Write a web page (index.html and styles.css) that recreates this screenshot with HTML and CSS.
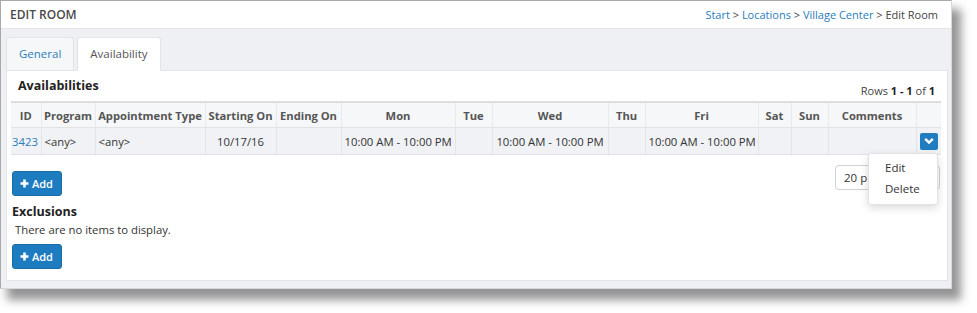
FILE: index.html
```html
<!DOCTYPE html>
<html lang="en">
<head>
    <meta charset="UTF-8">
    <meta name="viewport" content="width=device-width, initial-scale=1.0">
    <title>Edit Room</title>
    <link rel="stylesheet" href="styles.css">
</head>
<body>
    <div class="window">
        <div class="topbar">
            <div class="page-title">EDIT ROOM</div>
            <div class="crumbs">
                <a href="#">Start</a> &gt; <a href="#">Locations</a> &gt; <a href="#">Village Center</a> &gt; Edit Room
            </div>
        </div>

        <div class="main">
            <div class="tabs">
                <a class="tab" href="#">General</a>
                <a class="tab active" href="#">Availability</a>
            </div>

            <div class="panel">
                <div class="section-head">
                    <h2>Availabilities</h2>
                    <div class="rows">Rows <b>1 - 1</b> of <b>1</b></div>
                </div>

                <table class="grid">
                    <colgroup>
                        <col class="w-id"><col class="w-prog"><col class="w-type"><col class="w-start"><col class="w-end">
                        <col class="w-day"><col class="w-short"><col class="w-day2"><col class="w-short">
                        <col class="w-day3"><col class="w-sat"><col class="w-short"><col class="w-comm"><col class="w-act">
                    </colgroup>
                    <thead>
                        <tr>
                            <th>ID</th>
                            <th>Program</th>
                            <th>Appointment Type</th>
                            <th>Starting On</th>
                            <th>Ending On</th>
                            <th>Mon</th>
                            <th>Tue</th>
                            <th>Wed</th>
                            <th>Thu</th>
                            <th>Fri</th>
                            <th>Sat</th>
                            <th>Sun</th>
                            <th>Comments</th>
                            <th></th>
                        </tr>
                    </thead>
                    <tbody>
                        <tr>
                            <td><a href="#">3423</a></td>
                            <td>&lt;any&gt;</td>
                            <td>&lt;any&gt;</td>
                            <td class="mid">10/17/16</td>
                            <td></td>
                            <td class="mid">10:00 AM - 10:00 PM</td>
                            <td></td>
                            <td class="mid">10:00 AM - 10:00 PM</td>
                            <td></td>
                            <td class="mid">10:00 AM - 10:00 PM</td>
                            <td></td>
                            <td></td>
                            <td></td>
                            <td class="act">
                                <button class="caret-btn">
                                    <svg width="10" height="8" viewBox="0 0 10 8"><path d="M1.2 1.8 L5 5.6 L8.8 1.8" fill="none" stroke="#fff" stroke-width="2.4"/></svg>
                                </button>
                                <div class="menu">
                                    <a href="#">Edit</a>
                                    <a href="#">Delete</a>
                                </div>
                            </td>
                        </tr>
                    </tbody>
                </table>

                <div class="actions">
                    <button class="btn-add">
                        <svg width="9" height="9" viewBox="0 0 9 9"><path d="M4.5 0.5 V8.5 M0.5 4.5 H8.5" stroke="#fff" stroke-width="2.6"/></svg>
                        Add
                    </button>
                    <div class="pager">20 p</div>
                </div>

                <h2 class="sub">Exclusions</h2>
                <div class="empty">There are no items to display.</div>
                <button class="btn-add">
                    <svg width="9" height="9" viewBox="0 0 9 9"><path d="M4.5 0.5 V8.5 M0.5 4.5 H8.5" stroke="#fff" stroke-width="2.6"/></svg>
                    Add
                </button>
            </div>
        </div>
    </div>
</body>
</html>
```

FILE: styles.css
```css
body {
    margin: 0;
    min-height: 313px;
    background: #fff;
    font-family: 'Open Sans', 'Liberation Sans', sans-serif;
    font-size: 11.3px;
    color: #444;
}
a {
    color: #2b7dbb;
    text-decoration: none;
}
.window {
    width: 950px;
    background: #eef0f3;
    border-top: 1px solid #a9a9a9;
    border-left: 1px solid #a9a9a9;
    border-right: 1px solid #d6d8db;
    border-bottom: 1px solid #d6d8db;
    box-shadow: 8px 10px 9px 1px rgba(0, 0, 0, 0.42);
}
.topbar {
    height: 27px;
    background: #fff;
    border-bottom: 1px solid #e3e5e8;
    display: flex;
    justify-content: space-between;
    align-items: center;
    padding: 0 13px 0 9px;
}
.page-title {
    font-size: 12px;
    font-weight: 600;
    color: #4a4a4a;
}
.crumbs {
    font-size: 11px;
    color: #444;
}
.main {
    padding: 8px 3px 7px 5px;
}
.tabs {
    display: flex;
    gap: 3px;
}
.tab {
    height: 32px;
    line-height: 32px;
    padding: 0 12px;
    font-size: 11.5px;
    border: 1px solid #e1e4e8;
    border-bottom: none;
    border-radius: 3px 3px 0 0;
    background: #f6f7f9;
    color: #2b7dbb;
}
.tab.active {
    background: #fff;
    color: #555;
    height: 33px;
    margin-bottom: -1px;
    position: relative;
}
.panel {
    background: #fff;
    border: 1px solid #e1e4e8;
    padding: 5px 7px 11px 4px;
}
.section-head {
    display: flex;
    justify-content: space-between;
    height: 25px;
}
h2 {
    margin: 0;
    font-size: 12.5px;
    font-weight: 700;
    line-height: 20px;
    color: #222;
}
.section-head h2 {
    padding-left: 7px;
}
.rows {
    align-self: flex-end;
    margin-bottom: 2px;
    margin-right: 5px;
    line-height: 16px;
    font-size: 11px;
    color: #444;
}
.rows b {
    color: #222;
}
.grid {
    width: 930px;
    table-layout: fixed;
    border-collapse: collapse;
    border-top: 2px solid #dcdee2;
}
.w-id { width: 30px; }
.w-prog { width: 54px; }
.w-type { width: 110px; }
.w-start { width: 71px; }
.w-end { width: 65px; }
.w-day { width: 114px; }
.w-day2 { width: 116px; }
.w-day3 { width: 113px; }
.w-short { width: 37px; }
.w-sat { width: 33px; }
.w-comm { width: 88px; }
.w-act { width: 25px; }
.grid th {
    height: 24px;
    background: #f6f7f8;
    color: #555;
    font-weight: 700;
    font-size: 11.2px;
    text-align: center;
    white-space: nowrap;
    padding: 0 1px;
    border-left: 1px solid #e8eaed;
    border-bottom: 1px solid #e0e2e6;
}
.grid th:first-child,
.grid td:first-child {
    border-left: none;
}
.grid td {
    height: 26px;
    background: #f0f2f5;
    padding: 0 3px;
    white-space: nowrap;
    border-left: 1px solid #e3e5e9;
    border-bottom: 1px solid #dfe1e5;
    color: #333;
}
.grid td.mid {
    text-align: center;
}
.grid td:first-child {
    padding-left: 1px;
}
.grid td.act {
    position: relative;
    padding: 0;
    text-align: right;
    padding-right: 3px;
}
.caret-btn {
    width: 18px;
    height: 17px;
    padding: 0;
    border: none;
    border-radius: 2px;
    background: #1f7dc0;
    display: inline-flex;
    align-items: center;
    justify-content: center;
    vertical-align: middle;
}
.menu {
    position: absolute;
    top: 25px;
    right: 3px;
    width: 68px;
    padding: 4px 0;
    background: #fff;
    border: 1px solid #e0e2e6;
    border-radius: 3px;
    box-shadow: 0 3px 8px rgba(0, 0, 0, 0.15);
    text-align: left;
    z-index: 2;
}
.menu a {
    display: block;
    padding: 2px 0 3px 16px;
    line-height: 16px;
    font-size: 11.5px;
    color: #333;
}
.actions {
    display: flex;
    justify-content: space-between;
    align-items: flex-start;
    margin-top: 10px;
}
.actions .btn-add {
    margin-top: 6px;
}
.btn-add {
    height: 25px;
    padding: 0 8px 0 7px;
    margin-left: 1px;
    background: #1d7cbf;
    border: 1px solid #1a6ca6;
    border-radius: 3px;
    color: #fff;
    font-family: 'Open Sans', 'Liberation Sans', sans-serif;
    font-size: 11px;
    font-weight: 600;
    display: inline-flex;
    align-items: center;
    gap: 3px;
}
.pager {
    width: 95px;
    height: 23px;
    line-height: 23px;
    padding-left: 8px;
    border: 1px solid #cfd2d6;
    border-radius: 4px;
    color: #333;
    font-size: 11.5px;
    overflow: hidden;
    white-space: nowrap;
}
h2.sub {
    margin-top: 6px;
    padding-left: 1px;
}
.empty {
    padding-left: 4px;
    line-height: 16px;
    margin-bottom: 6px;
    color: #333;
}
```
